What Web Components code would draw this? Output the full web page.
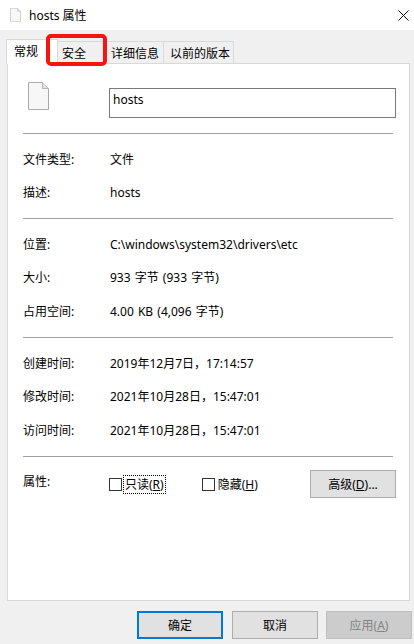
<!DOCTYPE html>
<html lang="zh">
<head>
<meta charset="utf-8">
<title>hosts 属性</title>
<style>
  html, body { margin: 0; padding: 0; }
  body {
    width: 414px;
    height: 644px;
    overflow: hidden;
    background: #f0f0f0;
    color: #000;
    font: 12px "Noto Sans", "Noto Sans CJK SC", sans-serif;
  }
</style>
</head>
<body>
<props-dialog>
  <title-bar slot="title">hosts 属性</title-bar>

  <tab-strip slot="tabs"></tab-strip>

  <name-row></name-row>
  <h-rule></h-rule>
  <info-group>
    <info-row label="文件类型:">文件</info-row>
    <info-row label="描述:">hosts</info-row>
  </info-group>
  <h-rule></h-rule>
  <info-group>
    <info-row label="位置:">C:\windows\system32\drivers\etc</info-row>
    <info-row label="大小:">933 字节 (933 字节)</info-row>
    <info-row label="占用空间:">4.00 KB (4,096 字节)</info-row>
  </info-group>
  <h-rule></h-rule>
  <info-group>
    <info-row label="创建时间:">2019年12月7日，17:14:57</info-row>
    <info-row label="修改时间:">2021年10月28日，15:47:01</info-row>
    <info-row label="访问时间:">2021年10月28日，15:47:01</info-row>
  </info-group>
  <h-rule></h-rule>
  <attr-row></attr-row>

  <win-button slot="footer" kind="primary">确定</win-button>
  <win-button slot="footer">取消</win-button>
  <win-button slot="footer" kind="disabled">应用(<u>A</u>)</win-button>
</props-dialog>

<script>
// small page icon, used in the title bar and the general tab
const fileIcon = (w, h) => `
  <svg width="${w}" height="${h}" viewBox="0 0 21 28" style="display:block">
    <path d="M.5.5h14l6 6v21H.5z" fill="#f7f7f7" stroke="#a8a8a8"/>
    <path d="M14.5.5v6h6" fill="#e4e4e4" stroke="#b4b4b4"/>
  </svg>`;

class PropsDialog extends HTMLElement {
  constructor() {
    super();
    this.attachShadow({ mode: "open" });
    this.shadowRoot.innerHTML = `
      <style>
        :host { display: flex; flex-direction: column; width: 414px; height: 644px; position: relative; }
        .pane {
          box-sizing: border-box;
          height: 538px;
          margin: 0 4px 0 7px;
          background: #fff;
          border: 1px solid #d9d9d9;
          padding: 0 13px 0 15px;
        }
        footer { display: flex; justify-content: flex-end; gap: 8px; padding: 10px 2px 0 0; }
        /* the red mark somebody drew over the screenshot */
        .mark {
          position: absolute;
          left: 46px;
          top: 34px;
          width: 61px;
          height: 32px;
          box-sizing: border-box;
          border: 4px solid #f5140f;
          border-radius: 5px;
          z-index: 2;
        }
      </style>
      <slot name="title"></slot>
      <slot name="tabs"></slot>
      <div class="pane"><slot></slot></div>
      <footer><slot name="footer"></slot></footer>
      <div class="mark"></div>
    `;
  }
}

class TitleBar extends HTMLElement {
  constructor() {
    super();
    this.attachShadow({ mode: "open" });
    this.shadowRoot.innerHTML = `
      <style>
        :host {
          display: flex;
          align-items: center;
          height: 30px;
          background: #fff;
          padding-left: 10px;
        }
        .text { margin-left: 8px; flex: 1; }
        svg.close { margin-right: 5px; }
      </style>
      ${fileIcon(11, 14)}
      <span class="text"><slot></slot></span>
      <svg class="close" width="11" height="11" viewBox="0 0 11 11">
        <path d="M.5.5l10 10M10.5.5l-10 10" stroke="#111" fill="none"/>
      </svg>
    `;
  }
}

class TabStrip extends HTMLElement {
  constructor() {
    super();
    this.attachShadow({ mode: "open" });
    this.shadowRoot.innerHTML = `
      <style>
        :host { display: flex; align-items: flex-end; height: 34px; padding-left: 7px; position: relative; z-index: 1; margin-bottom: -1px; }
        .tab {
          box-sizing: border-box;
          height: 22px;
          margin-bottom: 1px;
          margin-left: -1px;
          display: flex;
          align-items: center;
          background: #f0f0f0;
          border: 1px solid #d9d9d9;
          border-bottom: 0;
        }
        .tab:first-child { margin-left: 0; }
        .on {
          height: 25px;
          margin-bottom: 0;
          background: #fff;
          align-items: flex-start;
          padding-top: 2px;
          z-index: 1;
        }
      </style>
      <div class="tab on" style="width:52px;padding-left:7px">常规</div>
      <div class="tab" style="width:49px;padding-left:4px">安全</div>
      <div class="tab" style="width:59px;padding-left:5px">详细信息</div>
      <div class="tab" style="width:71px;padding-left:6px">以前的版本</div>
    `;
  }
}

class NameRow extends HTMLElement {
  constructor() {
    super();
    this.attachShadow({ mode: "open" });
    this.shadowRoot.innerHTML = `
      <style>
        :host { display: flex; align-items: flex-start; height: 69px; box-sizing: border-box; padding: 18px 0 0 5px; }
        .icon { width: 81px; flex: none; }
        .field {
          box-sizing: border-box;
          flex: 1;
          height: 30px;
          margin-top: 6px;
          border: 1px solid #7a7a7a;
          padding: 2px 3px;
        }
      </style>
      <div class="icon">${fileIcon(21, 28)}</div>
      <div class="field">hosts</div>
    `;
  }
}

class HRule extends HTMLElement {
  constructor() {
    super();
    this.attachShadow({ mode: "open" });
    this.shadowRoot.innerHTML = `
      <style>:host { display: block; height: 1px; margin-right: 3px; background: #a0a0a0; }</style>
    `;
  }
}

class InfoGroup extends HTMLElement {
  constructor() {
    super();
    this.attachShadow({ mode: "open" });
    this.shadowRoot.innerHTML = `
      <style>
        :host { display: flex; flex-direction: column; gap: 16px; padding: 17px 0; }
        /* row pitch in the dialog goes 33, 34 */
        ::slotted(:nth-child(3)) { margin-top: 1px; }
      </style>
      <slot></slot>
    `;
  }
}

class InfoRow extends HTMLElement {
  constructor() {
    super();
    this.attachShadow({ mode: "open" });
    this.shadowRoot.innerHTML = `
      <style>
        :host { display: grid; grid-template-columns: 87px 1fr; height: 17px; line-height: 17px; white-space: nowrap; }
        .value { word-spacing: 1px; }
      </style>
      <span class="label"></span>
      <span class="value"><slot></slot></span>
    `;
    this.shadowRoot.querySelector(".label").textContent = this.getAttribute("label");
  }
}

class CheckBox extends HTMLElement {
  constructor() {
    super();
    this.attachShadow({ mode: "open" });
    this.shadowRoot.innerHTML = `
      <style>
        :host { display: inline-flex; align-items: center; line-height: 17px; white-space: nowrap; }
        .box { width: 11px; height: 11px; border: 1px solid #333; background: #fff; margin-right: 2px; flex: none; }
        .text { padding: 0 1px; }
        :host([focused]) .text { outline: 1px dotted #000; outline-offset: 0; }
      </style>
      <span class="box"></span>
      <span class="text"><slot></slot></span>
    `;
  }
}

class AttrRow extends HTMLElement {
  constructor() {
    super();
    this.attachShadow({ mode: "open" });
    this.shadowRoot.innerHTML = `
      <style>
        :host { display: flex; align-items: flex-start; padding-top: 13px; white-space: nowrap; }
        .label { width: 87px; flex: none; line-height: 17px; padding-top: 3px; }
        .checks { display: flex; gap: 37px; margin-left: -1px; padding-top: 6px; flex: 1; }
      </style>
      <span class="label">属性:</span>
      <div class="checks">
        <check-box focused>只读(<u>R</u>)</check-box>
        <check-box>隐藏(<u>H</u>)</check-box>
      </div>
      <win-button>高级(<u>D</u>)...</win-button>
    `;
  }
}

class WinButton extends HTMLElement {
  constructor() {
    super();
    this.attachShadow({ mode: "open" });
    this.shadowRoot.innerHTML = `
      <style>
        :host {
          box-sizing: border-box;
          display: inline-flex;
          align-items: center;
          justify-content: center;
          width: 86px;
          height: 28px;
          background: #e1e1e1;
          border: 1px solid #adadad;
          white-space: nowrap;
        }
        :host([kind="primary"]) { border: 2px solid #0078d7; margin-right: 1px; }
        :host([kind="disabled"]) { background: #cccccc; border-color: #bfbfbf; color: #838383; }
      </style>
      <slot></slot>
    `;
  }
}

customElements.define("props-dialog", PropsDialog);
customElements.define("title-bar", TitleBar);
customElements.define("tab-strip", TabStrip);
customElements.define("name-row", NameRow);
customElements.define("h-rule", HRule);
customElements.define("info-group", InfoGroup);
customElements.define("info-row", InfoRow);
customElements.define("check-box", CheckBox);
customElements.define("attr-row", AttrRow);
customElements.define("win-button", WinButton);
</script>
</body>
</html>
